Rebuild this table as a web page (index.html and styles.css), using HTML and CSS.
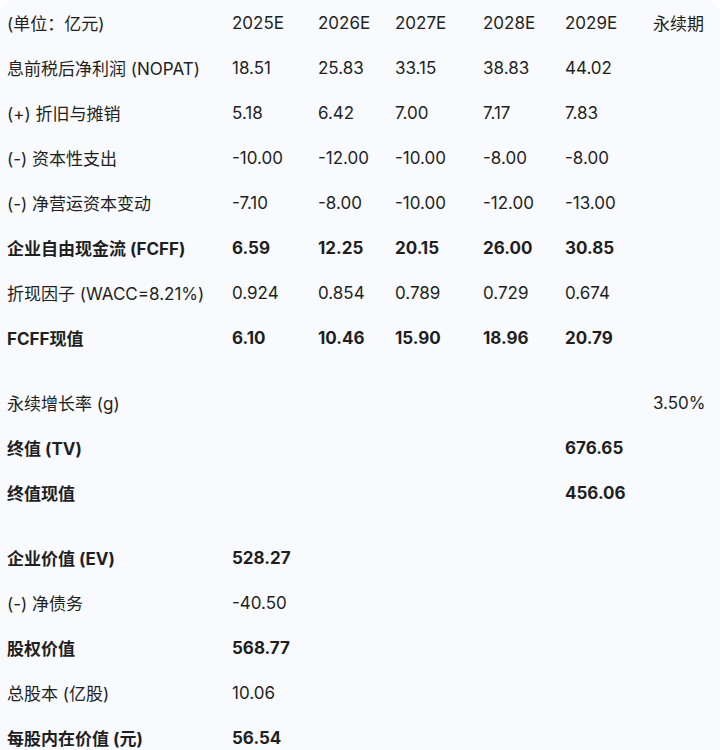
FILE: index.html
```html
<!DOCTYPE html>
<html lang="zh-CN">
<head>
<meta charset="utf-8">
<link rel="stylesheet" href="styles.css">
</head>
<body>
<div class="card">
  <div class="grid">
    <div class="row"><span>(单位：亿元)</span><span>2025E</span><span>2026E</span><span>2027E</span><span>2028E</span><span>2029E</span><span>永续期</span></div>
    <div class="row"><span>息前税后净利润 (NOPAT)</span><span>18.51</span><span>25.83</span><span>33.15</span><span>38.83</span><span>44.02</span><span></span></div>
    <div class="row"><span>(+) 折旧与摊销</span><span>5.18</span><span>6.42</span><span>7.00</span><span>7.17</span><span>7.83</span><span></span></div>
    <div class="row"><span>(-) 资本性支出</span><span>-10.00</span><span>-12.00</span><span>-10.00</span><span>-8.00</span><span>-8.00</span><span></span></div>
    <div class="row"><span>(-) 净营运资本变动</span><span>-7.10</span><span>-8.00</span><span>-10.00</span><span>-12.00</span><span>-13.00</span><span></span></div>
    <div class="row bold"><span>企业自由现金流 (FCFF)</span><span>6.59</span><span>12.25</span><span>20.15</span><span>26.00</span><span>30.85</span><span></span></div>
    <div class="row"><span>折现因子 (WACC=8.21%)</span><span>0.924</span><span>0.854</span><span>0.789</span><span>0.729</span><span>0.674</span><span></span></div>
    <div class="row bold"><span>FCFF现值</span><span>6.10</span><span>10.46</span><span>15.90</span><span>18.96</span><span>20.79</span><span></span></div>
  </div>
  <div class="grid section">
    <div class="row"><span>永续增长率 (g)</span><span></span><span></span><span></span><span></span><span></span><span>3.50%</span></div>
    <div class="row bold"><span>终值 (TV)</span><span></span><span></span><span></span><span></span><span>676.65</span><span></span></div>
    <div class="row bold"><span>终值现值</span><span></span><span></span><span></span><span></span><span>456.06</span><span></span></div>
  </div>
  <div class="grid section">
    <div class="row bold"><span>企业价值 (EV)</span><span>528.27</span><span></span><span></span><span></span><span></span><span></span></div>
    <div class="row"><span>(-) 净债务</span><span>-40.50</span><span></span><span></span><span></span><span></span><span></span></div>
    <div class="row bold"><span>股权价值</span><span>568.77</span><span></span><span></span><span></span><span></span><span></span></div>
    <div class="row"><span>总股本 (亿股)</span><span>10.06</span><span></span><span></span><span></span><span></span><span></span></div>
    <div class="row bold"><span>每股内在价值 (元)</span><span>56.54</span><span></span><span></span><span></span><span></span><span></span></div>
  </div>
</div>
</body>
</html>
```

FILE: styles.css
```css
html, body {
  margin: 0;
  padding: 0;
  background: #ffffff;
}
body {
  font-family: Inter, "Noto Sans CJK SC", sans-serif;
  font-size: 17px;
  color: #1f1f1f;
}
.card {
  background: #f8fafd;
  border-radius: 16px 16px 0 0;
  min-height: 770px;
  width: 720px;
  overflow: hidden;
}
.grid {
  display: flex;
  flex-direction: column;
}
.section {
  margin-top: 20px;
}
.row {
  display: grid;
  grid-template-columns: 224px 86px 77px 88px 82px 88px 75px;
  height: 45px;
  align-items: center;
  white-space: nowrap;
}
.row span {
  padding-left: 8px;
}
.row span:first-child {
  padding-left: 7px;
}
.bold {
  font-weight: 700;
}
```
